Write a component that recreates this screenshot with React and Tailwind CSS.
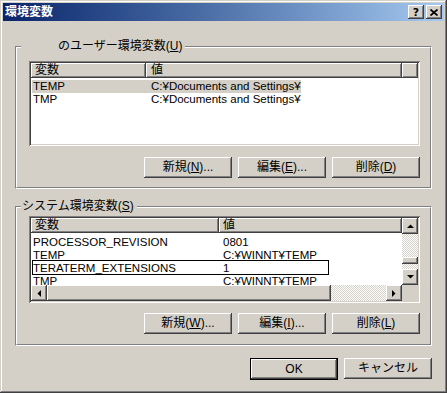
import React from "react";

const RAISED =
  "shadow-[inset_-1px_-1px_#404040,inset_1px_1px_#ffffff,inset_-2px_-2px_#808080,inset_2px_2px_#d4d0c8]";
const SUNKEN =
  "shadow-[inset_1px_1px_#808080,inset_-1px_-1px_#ffffff,inset_2px_2px_#404040,inset_-2px_-2px_#d4d0c8]";
const CHECKER =
  "bg-[image:repeating-conic-gradient(#ffffff_0_25%,#d4d0c8_0_50%)] bg-[length:2px_2px]";

function U({ children }) {
  return <span className="underline underline-offset-[1px]">{children}</span>;
}

function Btn({ children, def }) {
  return (
    <div
      className={
        "w-[88px] flex items-center justify-center bg-[#d4d0c8] " +
        RAISED +
        (def ? " h-[22px] border border-black" : " h-[21px]")
      }
    >
      <span className="leading-[13px]">{children}</span>
    </div>
  );
}

function Arrow({ dir }) {
  const pts = {
    up: "0,4 7,4 3.5,0.5",
    down: "0,0 7,0 3.5,3.5",
    left: "4,0 4,7 0.5,3.5",
    right: "0,0 0,7 3.5,3.5",
  }[dir];
  const vert = dir === "up" || dir === "down";
  return (
    <div className={"w-[16px] h-[16px] flex items-center justify-center bg-[#d4d0c8] " + RAISED}>
      <svg width={vert ? 7 : 4} height={vert ? 4 : 7} viewBox={vert ? "0 0 7 4" : "0 0 4 7"}>
        <polygon points={pts} fill="#000" />
      </svg>
    </div>
  );
}

function Group({ label, className, inner, children }) {
  return (
    <div
      className={
        "relative border border-t-[#808080] border-l-[#808080] border-r-white border-b-white " +
        (className || "")
      }
    >
      <div
        className={
          "flex flex-col border border-t-white border-l-white border-r-[#808080] border-b-[#808080] " +
          inner
        }
      >
        {children}
      </div>
      <div className="absolute left-[5px] top-[-7px] bg-[#d4d0c8] px-[1px] leading-[13px] flex">
        {label}
      </div>
    </div>
  );
}

function ButtonsRow({ a, b, c, className }) {
  return (
    <div className={"flex justify-end gap-[6px] " + className}>
      <Btn>{a}</Btn>
      <Btn>{b}</Btn>
      <Btn>{c}</Btn>
    </div>
  );
}

function Header({ col1, col2Class }) {
  return (
    <div className="h-[15px] flex shrink-0">
      <div className={"bg-[#d4d0c8] pl-[4px] leading-[15px] " + col1 + " " + RAISED}>変数</div>
      <div className={"bg-[#d4d0c8] pl-[4px] leading-[15px] " + col2Class + " " + RAISED}>値</div>
    </div>
  );
}

function UserList() {
  return (
    <div className={"h-[85px] bg-white p-[2px] flex flex-col " + SUNKEN}>
      <div className="h-[15px] flex shrink-0">
        <div className={"w-[115px] bg-[#d4d0c8] pl-[4px] leading-[15px] " + RAISED}>変数</div>
        <div className={"w-[256px] bg-[#d4d0c8] pl-[5px] leading-[15px] " + RAISED}>値</div>
        <div className={"flex-1 bg-[#d4d0c8] " + RAISED}></div>
      </div>
      <div className="pt-[2px] flex flex-col text-[11.5px]">
        <div className="h-[13px] ml-[1px] w-[269px] bg-[#d4d0c8] flex leading-[13px]">
          <div className="w-[114px] pl-[1px]">TEMP</div>
          <div className="pl-[5px] whitespace-nowrap">C:¥Documents and Settings¥</div>
        </div>
        <div className="h-[13px] ml-[1px] w-[269px] flex leading-[13px]">
          <div className="w-[114px] pl-[1px]">TMP</div>
          <div className="pl-[5px] whitespace-nowrap">C:¥Documents and Settings¥</div>
        </div>
      </div>
    </div>
  );
}

function SysRow({ name, value, focus }) {
  return (
    <div className="relative h-[13px] flex leading-[13px] shrink-0">
      <div className="w-[188px] pl-[2px] whitespace-nowrap">{name}</div>
      <div className="pl-[4px] whitespace-nowrap">{value}</div>
      {focus && (
        <div className="absolute left-[1px] top-[-2px] w-[297px] h-[15px] border border-black"></div>
      )}
    </div>
  );
}

function SystemList() {
  return (
    <div className={"h-[87px] bg-white p-[2px] flex " + SUNKEN}>
      <div className="flex-1 flex flex-col min-w-0">
        <Header col1="w-[188px]" col2Class="flex-1" />
        <div className="flex-1 overflow-hidden pt-[3px] flex flex-col text-[11.5px]">
          <SysRow name="PROCESSOR_REVISION" value="0801" />
          <SysRow name="TEMP" value="C:¥WINNT¥TEMP" />
          <SysRow name="TERATERM_EXTENSIONS" value="1" focus />
          <SysRow name="TMP" value="C:¥WINNT¥TEMP" />
        </div>
        <div className="h-[16px] flex shrink-0">
          <Arrow dir="left" />
          <div className={"w-[284px] h-[16px] bg-[#d4d0c8] " + RAISED}></div>
          <div className={"flex-1 " + CHECKER}></div>
          <Arrow dir="right" />
        </div>
      </div>
      <div className="w-[16px] flex flex-col">
        <Arrow dir="up" />
        <div className={"h-[23px] " + CHECKER}></div>
        <div className={"h-[7px] bg-[#d4d0c8] " + RAISED}></div>
        <div className={"h-[5px] " + CHECKER}></div>
        <Arrow dir="down" />
        <div className="h-[16px] bg-[#d4d0c8]"></div>
      </div>
    </div>
  );
}

function TitleBtn({ children }) {
  return (
    <div className={"w-[16px] h-[14px] flex items-center justify-center bg-[#d4d0c8] " + RAISED}>
      {children}
    </div>
  );
}

export default function App() {
  return (
    <div
      className={
        "w-[447px] h-[393px] bg-[#d4d0c8] p-[3px] flex flex-col text-[12px] text-black leading-[13px] font-['Liberation_Sans','Noto_Sans_CJK_JP',sans-serif] shadow-[inset_-1px_-1px_#404040,inset_1px_1px_#d4d0c8,inset_-2px_-2px_#808080,inset_2px_2px_#ffffff]"
      }
    >
      <div className="h-[18px] shrink-0 flex items-center justify-between bg-gradient-to-r from-[#0a246a] to-[#a6caf0] pl-[2px] pr-[2px]">
        <span className="text-white font-bold text-[12px] leading-[14px]">環境変数</span>
        <div className="flex gap-[2px]">
          <TitleBtn>
            <span className="font-bold text-[11px] leading-[11px] font-['DejaVu_Sans',sans-serif]">?</span>
          </TitleBtn>
          <TitleBtn>
            <svg width="8" height="7" viewBox="0 0 8 7">
              <path d="M0.5 0.5 L7.5 6.5 M7.5 0.5 L0.5 6.5" stroke="#000" strokeWidth="1.7" fill="none" />
            </svg>
          </TitleBtn>
        </div>
      </div>

      <div className="flex flex-col px-[12px] pt-[25px]">
        <Group
          label={
            <>
              <span className="w-[36px] inline-block"></span>
              <span className="pr-[2px]">
                のユーザー環境変数(<U>U</U>)
              </span>
            </>
          }
          inner="pt-[13px] pl-[12px] pr-[10px] pb-[9px]"
        >
          <UserList />
          <ButtonsRow
            className="mt-[11px]"
            a={<>新規(<U>N</U>)...</>}
            b={<>編集(<U>E</U>)...</>}
            c={<>削除(<U>D</U>)</>}
          />
        </Group>

        <Group
          className="mt-[17px]"
          label={
            <span className="pr-[2px]">
              システム環境変数(<U>S</U>)
            </span>
          }
          inner="pt-[8px] pl-[12px] pr-[10px] pb-[10px]"
        >
          <SystemList />
          <ButtonsRow
            className="mt-[10px]"
            a={<>新規(<U>W</U>)...</>}
            b={<>編集(<U>I</U>)...</>}
            c={<>削除(<U>L</U>)</>}
          />
        </Group>

        <div className="flex justify-end gap-[6px] mt-[12px]">
          <Btn def>OK</Btn>
          <Btn>キャンセル</Btn>
        </div>
      </div>
    </div>
  );
}
